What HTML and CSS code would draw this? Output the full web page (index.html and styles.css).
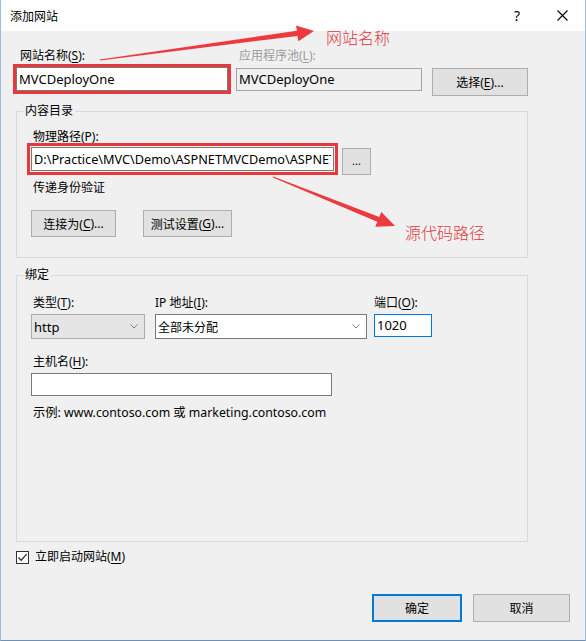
FILE: index.html
```html
<!DOCTYPE html>
<html lang="zh-CN">
<head>
<meta charset="utf-8">
<title>添加网站</title>
<link rel="stylesheet" href="styles.css">
</head>
<body>
<div class="window">
  <div class="titlebar">
    <span class="title">添加网站</span>
    <span class="help">?</span>
    <span class="close">
      <svg width="11" height="11" viewBox="0 0 11 11"><path d="M0.5 0.5 L10.5 10.5 M10.5 0.5 L0.5 10.5" stroke="#000" stroke-width="1.1" fill="none"/></svg>
    </span>
  </div>
  <div class="content">
    <div class="top-labels">
      <span class="lbl-site">网站名称(<u>S</u>):</span>
      <span class="lbl-pool">应用程序池(<u>L</u>):</span>
    </div>
    <div class="top-row">
      <div class="field site marked">MVCDeployOne</div>
      <div class="field pool">MVCDeployOne</div>
      <div class="btn choose">选择(<u>E</u>)...</div>
    </div>

    <fieldset class="group g1">
      <legend>内容目录</legend>
      <div class="group-body g1-body">
        <div class="lbl">物理路径(P):</div>
        <div class="path-row">
          <div class="field path marked"><span class="path-text">D:\Practice\MVC\Demo\ASPNETMVCDemo\ASPNET</span></div>
          <div class="btn dots">...</div>
        </div>
        <div class="lbl pass">传递身份验证</div>
        <div class="btn-row">
          <div class="btn connect">连接为(<u>C</u>)...</div>
          <div class="btn test">测试设置(<u>G</u>)...</div>
        </div>
      </div>
    </fieldset>

    <fieldset class="group g2">
      <legend>绑定</legend>
      <div class="group-body g2-body">
        <div class="bind-labels">
          <span class="c1">类型(<u>T</u>):</span>
          <span class="c2">IP 地址(<u>I</u>):</span>
          <span class="c3">端口(<u>O</u>):</span>
        </div>
        <div class="bind-row">
          <div class="select type"><span>http</span><svg class="chev" width="8" height="5" viewBox="0 0 8 5"><path d="M0.5 0.5 L4 4 L7.5 0.5" stroke="#808080" fill="none"/></svg></div>
          <div class="select ip"><span>全部未分配</span><svg class="chev" width="8" height="5" viewBox="0 0 8 5"><path d="M0.5 0.5 L4 4 L7.5 0.5" stroke="#808080" fill="none"/></svg></div>
          <div class="field port">1020</div>
        </div>
        <div class="lbl host-lbl">主机名(<u>H</u>):</div>
        <div class="field host"></div>
        <div class="lbl example">示例: www.contoso.com 或 marketing.contoso.com</div>
      </div>
    </fieldset>

    <div class="check-row">
      <span class="checkbox"><svg width="11" height="11" viewBox="0 0 11 11"><path d="M1.5 5.5 L4.2 8.3 L9.6 2.2" stroke="#222" stroke-width="1.2" fill="none"/></svg></span>
      <span class="check-lbl">立即启动网站(<u>M</u>)</span>
    </div>

    <div class="actions">
      <div class="btn ok">确定</div>
      <div class="btn cancel">取消</div>
    </div>
  </div>
</div>

<div class="annot">
  <svg class="arrows" width="586" height="641" viewBox="0 0 586 641">
    <polygon points="99.9,59.4 296.9,30.7 296.1,25.4 314,31 298.3,41.2 297.5,35.9 100.1,60.6" fill="#ec3a3e"/>
    <polygon points="273.2,176.4 379.3,216.9 381.3,211.9 395,226 375.3,226.7 377.3,221.7 272.8,177.6" fill="#ec3a3e"/>
  </svg>
  <span class="note note1">网站名称</span>
  <span class="note note2">源代码路径</span>
</div>
</body>
</html>
```

FILE: styles.css
```css
* { box-sizing: border-box; }

body {
  margin: 0;
  position: relative;
  font-family: "Noto Sans", "Noto Sans CJK SC", sans-serif;
  font-size: 12px;
  color: #000;
}

u { text-decoration: underline; text-underline-offset: 2px; }

.window {
  width: 586px;
  height: 641px;
  background: #f0f0f0;
  border-left: 1px solid #9dbde0;
  border-right: 1px solid #9dbde0;
  border-bottom: 1px solid #6f8fb5;
  display: flex;
  flex-direction: column;
  overflow: hidden;
}

.titlebar {
  height: 31px;
  background: #fff;
  display: flex;
  align-items: center;
  flex-shrink: 0;
}
.title { flex: 1; padding-left: 9px; font-size: 12px; }
.help { width: 44px; text-align: center; font-size: 14px; }
.close { width: 46px; display: flex; justify-content: center; align-items: center; }

.content {
  flex: 1;
  padding: 0 15px;
  display: flex;
  flex-direction: column;
}

.top-labels {
  margin-top: 17px;
  height: 16px;
  line-height: 16px;
  display: flex;
}
.lbl-site { width: 220px; padding-left: 4px; }
.lbl-pool { padding-left: 3px; color: #9b9b9b; }

.top-row {
  margin-top: 3px;
  display: flex;
  align-items: flex-start;
}

.field {
  background: #fff;
  border: 1px solid #7a7a7a;
  padding-left: 2px;
  font-size: 13px;
  white-space: nowrap;
  overflow: hidden;
}
.field.site { width: 212px; height: 24px; line-height: 22px; margin-right: 8px; }
.field.pool { width: 186px; height: 23px; line-height: 21px; margin-top: 1px; margin-right: 10px; background: #f0f0f0; border-color: #a3a3a3; }

.marked { outline: 3px solid #e7383e; outline-offset: 0; }

.btn {
  background: #e1e1e1;
  border: 1px solid #adadad;
  display: flex;
  align-items: center;
  justify-content: center;
  font-size: 12px;
  white-space: nowrap;
}
.btn.choose { width: 96px; height: 28px; margin-top: 1px; }

.group {
  margin: 0;
  padding: 0;
  border: 1px solid #d9d9d9;
  width: 512px;
  min-width: 0;
}
.group legend {
  margin-left: 6px;
  padding: 0 2px;
  line-height: 16px;
  height: 16px;
}
.g1 { margin-top: 7px; }
.g2 { margin-top: 9px; }

.group-body { padding-left: 14px; }
.g1-body { padding-bottom: 20px; }
.g2-body { padding-bottom: 120px; }

.lbl { height: 16px; line-height: 16px; padding-left: 2px; }
.g1-body > .lbl:first-child { margin-top: 10px; }

.path-row { margin-top: 2px; display: flex; align-items: flex-start; height: 28px; }
.field.path { width: 303px; height: 24px; line-height: 22px; margin-right: 8px; outline-offset: 1px; font-size: 12.7px; }
.path-text { display: block; width: 297px; overflow: hidden; }
.btn.dots { width: 29px; height: 27px; margin-top: 1px; font-size: 11px; padding-bottom: 3px; }

.lbl.pass { margin-top: 5px; }

.btn-row { margin-top: 14px; display: flex; }
.btn.connect { width: 85px; height: 27px; margin-right: 27px; }
.btn.test { width: 89px; height: 27px; }

.bind-labels { margin-top: 12px; display: flex; height: 16px; line-height: 16px; }
.bind-labels .c1 { width: 124px; padding-left: 2px; }
.bind-labels .c2 { width: 219px; }

.bind-row { margin-top: 3px; display: flex; align-items: flex-start; }
.select {
  height: 25px;
  border: 1px solid #acacac;
  display: flex;
  align-items: center;
  justify-content: space-between;
  padding: 0 6px 0 2px;
  font-size: 13px;
}
.select.type { width: 114px; margin-right: 10px; background: #e5e5e5; }
.select.ip { width: 212px; margin-right: 7px; background: #fff; border-color: #7a7a7a; font-size: 12px; }
.chev { flex-shrink: 0; }
.field.port { width: 58px; height: 23px; line-height: 21px; border-color: #0078d7; }

.lbl.host-lbl { margin-top: 15px; }
.field.host { margin-top: 3px; width: 301px; height: 23px; }
.lbl.example { margin-top: 9px; font-size: 12.3px; }

.check-row { margin-top: 7px; height: 16px; display: flex; align-items: center; }
.checkbox {
  width: 13px; height: 13px;
  border: 1px solid #333;
  background: #fff;
  display: flex; align-items: center; justify-content: center;
}
.check-lbl { margin-left: 6px; line-height: 16px; }

.actions { margin-top: 29px; display: flex; justify-content: flex-end; }
.btn.ok { width: 90px; height: 28px; margin-right: 11px; border: 2px solid #0078d7; }
.btn.cancel { width: 97px; height: 28px; }

.annot {
  position: absolute;
  left: 0; top: 0;
  width: 586px; height: 641px;
  pointer-events: none;
}
.arrows { position: absolute; left: 0; top: 0; }
.note {
  position: absolute;
  font-family: "Noto Sans CJK SC", sans-serif;
  font-weight: 300;
  font-size: 16px;
  line-height: 18px;
  color: #e0363e;
  white-space: nowrap;
}
.note1 { left: 326px; top: 28px; }
.note2 { left: 405px; top: 223px; }
```
